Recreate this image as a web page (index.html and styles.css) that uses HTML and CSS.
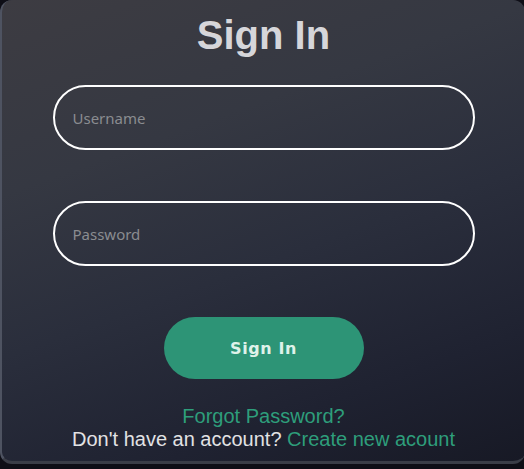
FILE: index.html
```html
<!DOCTYPE html>
<html>
<head>
<meta charset="utf-8">
<link rel="stylesheet" href="styles.css">
</head>
<body>
<div class="card">
  <h1 class="title">Sign In</h1>
  <form class="form">
    <input class="field" type="text" placeholder="Username">
    <input class="field" type="password" placeholder="Password">
    <button class="btn" type="button">Sign In</button>
  </form>
  <div class="links">
    <a class="link" href="#">Forgot Password?</a>
    <p class="signup">Don't have an account? <a class="link" href="#">Create new acount</a></p>
  </div>
</div>
</body>
</html>
```
FILE: styles.css
```css
html, body {
  margin: 0;
  padding: 0;
  background: #0e0e16;
  height: 469px;
  overflow: hidden;
}
.card {
  box-sizing: border-box;
  width: 525px;
  height: 464px;
  border-radius: 12px;
  background: linear-gradient(160deg, #3d3c42 0%, #353842 30%, #2a2e3c 55%, #1f2231 80%, #171925 100%);
  border-left: 2px solid #4e5361;
  border-bottom: 3px solid #3a3d47;
  padding-top: 12px;
  display: flex;
  flex-direction: column;
  align-items: center;
  font-family: "Liberation Sans", Arial, sans-serif;
}
.title {
  margin: 0;
  font-size: 40px;
  font-weight: bold;
  color: #d6d6da;
  line-height: 46px;
}
.form {
  margin-top: 27px;
  display: flex;
  flex-direction: column;
  align-items: center;
}
.field {
  box-sizing: border-box;
  width: 422px;
  height: 65px;
  border: 2px solid #ffffff;
  border-radius: 33px;
  background: transparent;
  padding: 0 18px;
  font-family: "Noto Sans", sans-serif;
  font-size: 15px;
  color: #ddd;
  outline: none;
}
.field::placeholder {
  color: #8a8c90;
}
.field + .field {
  margin-top: 51px;
}
.btn {
  margin-top: 51px;
  width: 200px;
  height: 62px;
  border: none;
  border-radius: 31px;
  background: #2d9476;
  color: #dff2ea;
  font-family: "DejaVu Sans", sans-serif;
  font-weight: bold;
  font-size: 16px;
  letter-spacing: 0.6px;
}
.links {
  margin-top: 26px;
  text-align: center;
  font-size: 20px;
  line-height: 23px;
}
.link {
  color: #2e9e7b;
  text-decoration: none;
}
.signup {
  margin: 0;
  color: #e2e2e4;
}
```
